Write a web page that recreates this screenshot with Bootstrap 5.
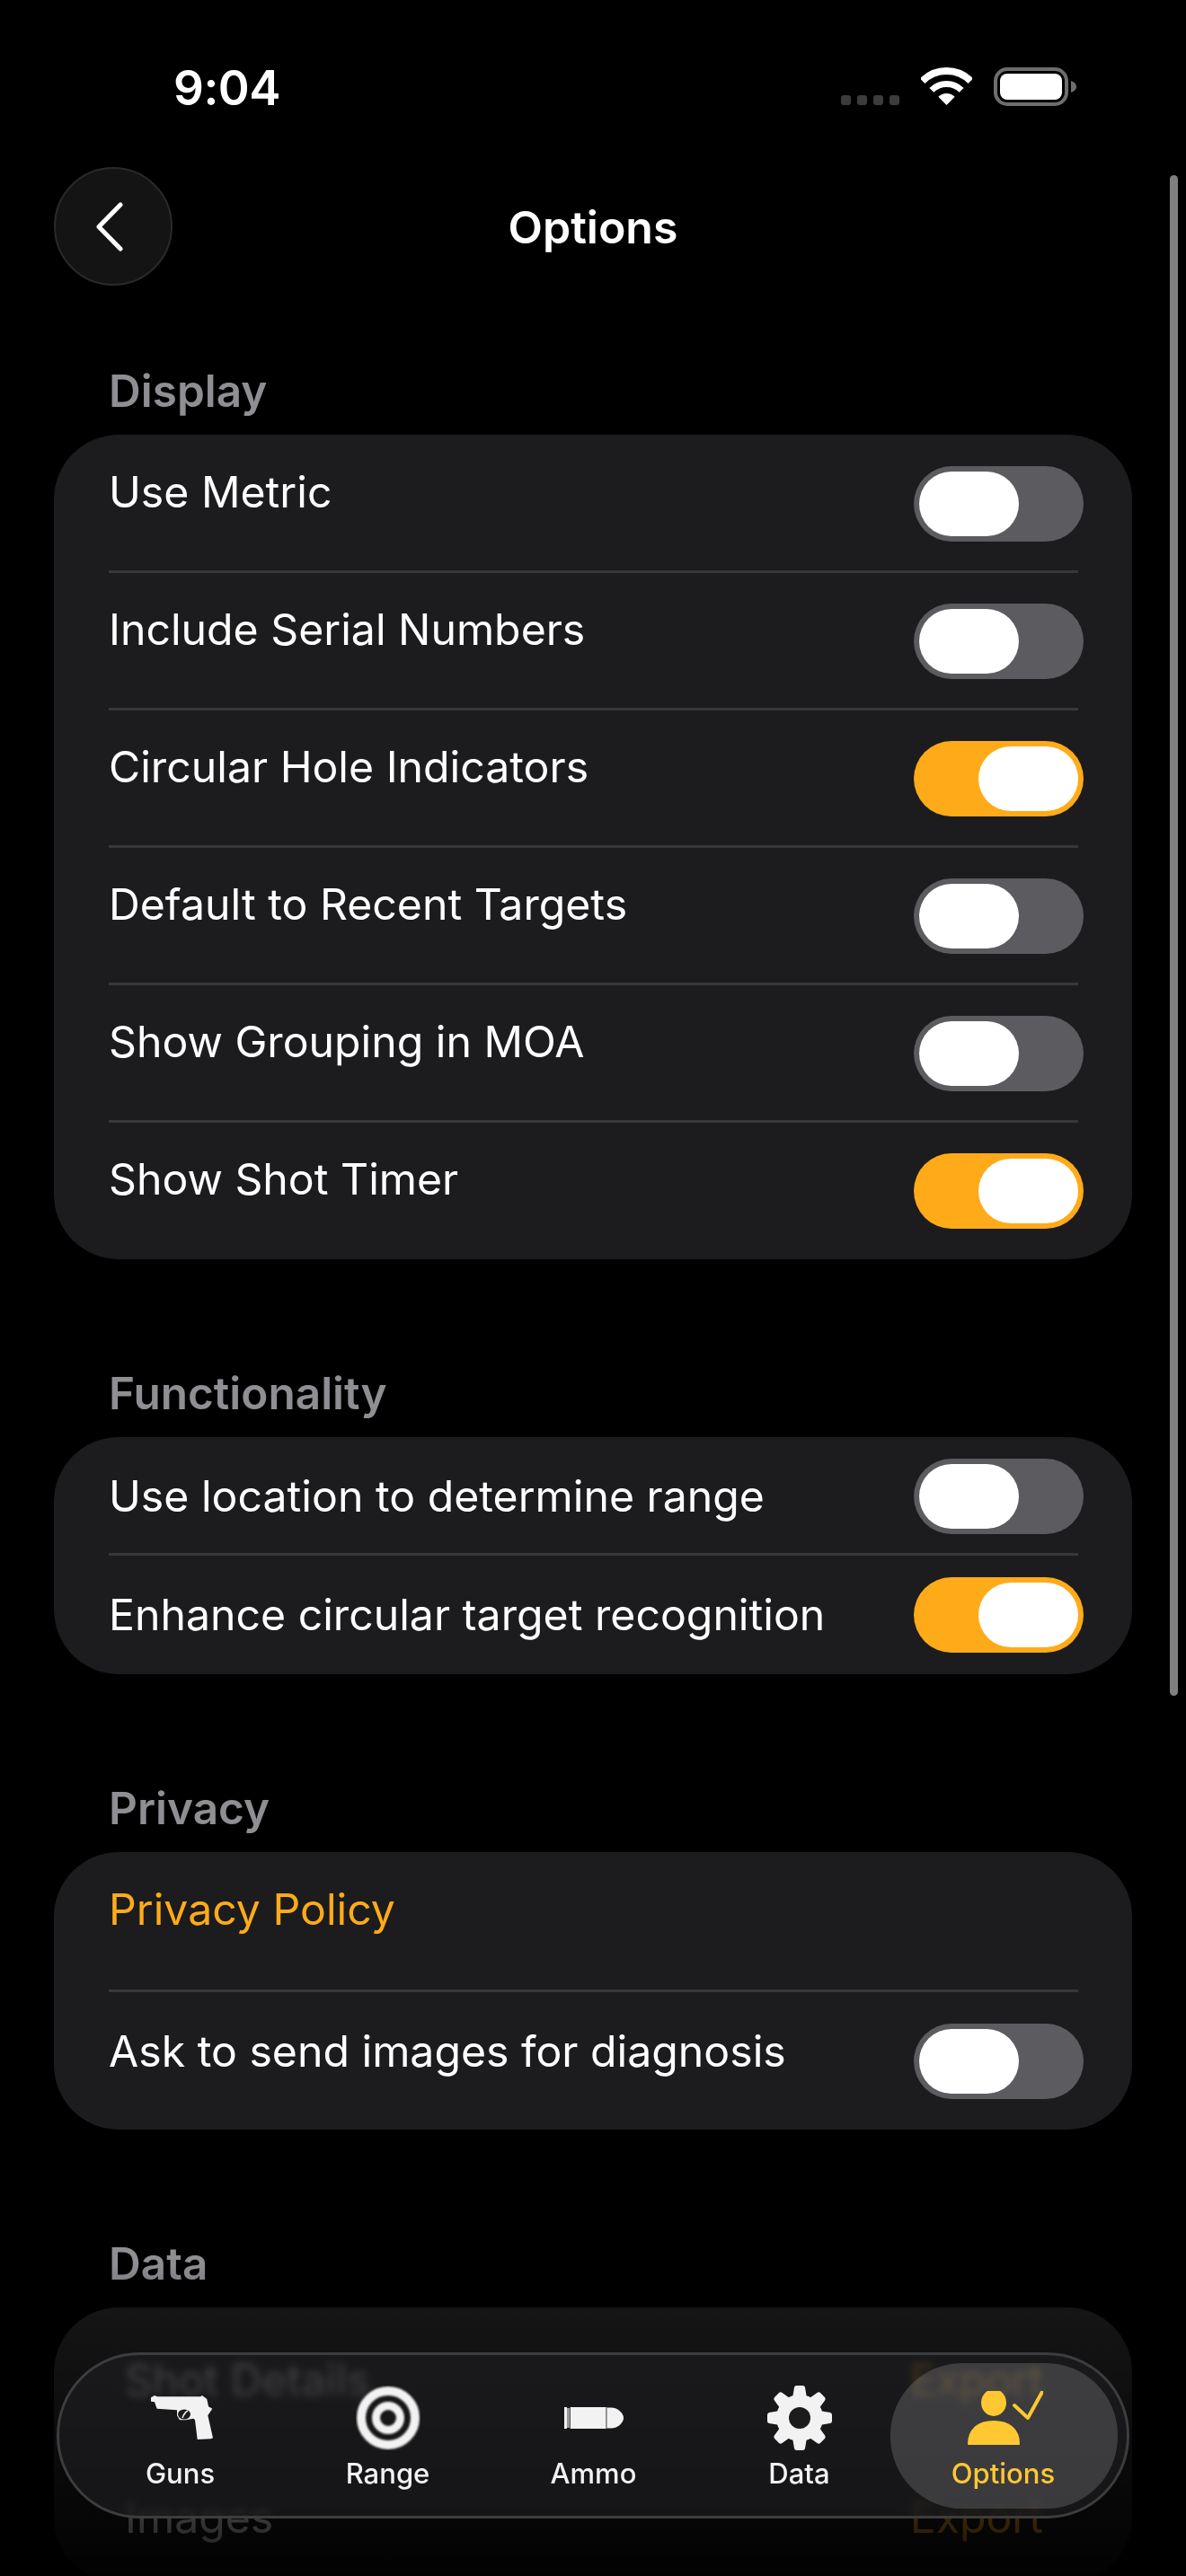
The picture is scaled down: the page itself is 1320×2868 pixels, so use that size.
<!DOCTYPE html>
<html lang="en">
<head>
  <meta charset="UTF-8" />
  <title>Options</title>
  <meta name="viewport" content="width=device-width, initial-scale=1" />
  <link href="https://cdn.jsdelivr.net/npm/bootstrap@5.3.0/dist/css/bootstrap.min.css" rel="stylesheet">
  <style>
    html, body {
      background-color: #000;
    }
    body {
      position: relative;
      height: 2868px;
      overflow: hidden;
      font-family: Inter, "Liberation Sans", sans-serif;
      color: #fff;
    }
    .status-bar {
      height: 186px;
      padding: 75px 122px 0 193px;
    }
    .status-time {
      font-size: 53px;
      line-height: 46px;
      font-weight: 600;
      letter-spacing: -.5px;
    }
    .signal-dots {
      gap: 7px;
      margin: 31px 24px 0 0;
    }
    .signal-dots span {
      width: 11px;
      height: 11px;
      border-radius: 3px;
      background-color: #3c3c3c;
    }
    .nav-head {
      height: 132px;
      padding-left: 60px;
    }
    .back-btn {
      width: 132px;
      height: 132px;
      background-color: #141414;
      border: 2px solid #2a2a2a;
    }
    .back-btn svg {
      margin-right: 8px;
    }
    .nav-title {
      left: 0;
      right: 0;
      top: 187px;
      line-height: 132px;
      font-size: 50px;
      font-weight: 600;
    }
    .group-title {
      font-size: 49.5px;
      line-height: 60px;
      font-weight: 600;
      color: #8e8e93;
      padding-left: 121px;
      margin-top: 119px;
      margin-bottom: 19px;
    }
    .group-title.first-title {
      margin-top: 87px;
    }
    .group-box {
      margin: 0 60px;
      padding: 0 60px 0 61px;
      background-color: #1c1c1e;
      border-radius: 72px;
    }
    .opt-row {
      border-bottom: 3px solid #38383a;
      font-size: 48.2px;
    }
    .opt-row:last-child {
      border-bottom: 0;
    }
    .rows-tall {
      padding-top: 1px;
      padding-bottom: 2px;
    }
    .rows-tall .opt-row {
      padding: 34px 0 32px;
    }
    .rows-tall .opt-label {
      padding-bottom: 26px;
    }
    .rows-tight .opt-row {
      padding: 24px 0 21px;
    }
    .rows-tight .opt-row:last-child {
      padding-bottom: 24px;
    }
    .opt-label {
      line-height: 50px;
      white-space: nowrap;
    }
    .privacy-link {
      height: 156px;
      padding-top: 39px;
      color: #ffab19;
    }
    .ask-row {
      padding: 35px 0 34px;
    }
    .ask-row .opt-label {
      padding-bottom: 22px;
    }
    .data-row {
      height: 153px;
      padding: 56px 39px 0 18px;
      border-bottom-color: transparent;
    }
    .export-link {
      color: #ffab19;
    }
    .switch-track {
      width: 189px;
      height: 84px;
      margin-right: -6px;
      padding: 6px;
      border-radius: 42px;
      background-color: #5b5b60;
    }
    .switch-track.is-on {
      background-color: #ffab19;
      justify-content: flex-end;
    }
    .switch-knob {
      width: 111px;
      height: 72px;
      border-radius: 36px;
      background-color: #fff;
    }
    .scroll-thumb {
      left: 1302px;
      top: 195px;
      width: 9px;
      height: 1693px;
      border-radius: 5px;
      background-color: #7f7f7f;
    }
    .bottom-fade {
      left: 0;
      right: 0;
      top: 2520px;
      height: 348px;
      background: linear-gradient(to bottom, rgba(0,0,0,0) 0, rgba(0,0,0,.25) 50px, rgba(0,0,0,.8) 290px, rgba(0,0,0,.92) 100%);
    }
    .tab-shell {
      left: 63px;
      top: 2619px;
      width: 1194px;
      height: 185px;
      padding: 34px 21px 0 22px;
      border-radius: 92px;
      border: 3px solid #3d3d3f;
      background-color: rgba(30,30,32,.68);
      backdrop-filter: blur(4px);
    }
    .tab-cell {
      width: 229px;
      color: #f2f2f2;
    }
    .tab-cell.is-active {
      color: #ffc832;
    }
    .tab-pill {
      left: 925px;
      top: 9px;
      width: 253px;
      height: 162px;
      border-radius: 80px;
      background-color: rgba(255,255,255,.16);
    }
    .tab-icon {
      height: 72px;
    }
    .tab-label {
      margin-top: 9px;
      font-size: 31px;
      line-height: 34px;
      font-weight: 500;
    }
    .is-active .tab-label,
    .first-tab .tab-label {
      margin-right: 4px;
    }
  </style>
</head>
<body>

  <!-- status bar -->
  <div class="status-bar d-flex align-items-start">
    <div class="status-time me-auto">9:04</div>
    <div class="signal-dots d-flex"><span></span><span></span><span></span><span></span></div>
    <svg width="57" height="42" viewBox="0 0 57 42" fill="none" stroke="#fff">
      <path d="M1.63 15.13A38 38 0 0 1 55.37 15.13" stroke-width="8"/>
      <path d="M11.88 25.38A23.5 23.5 0 0 1 45.12 25.38" stroke-width="7"/>
      <path d="M28.5 42L19.3 32.8A13 13 0 0 1 37.7 32.8Z" fill="#fff" stroke="none"/>
    </svg>
    <svg class="ms-4" width="92" height="43" viewBox="0 0 92 43">
      <rect x="2" y="2" width="79" height="39" rx="13" fill="none" stroke="#6e6e6e" stroke-width="4"/>
      <rect x="7" y="7" width="69" height="29" rx="8" fill="#fff"/>
      <path d="M86 15c3 1 6 3 6 6.500s-3 5.500-6 6.500z" fill="#6e6e6e"/>
    </svg>
  </div>

  <!-- header -->
  <div class="nav-head">
    <div class="back-btn rounded-circle d-flex align-items-center justify-content-center">
      <svg width="30" height="55" viewBox="0 0 30 55" fill="none" stroke="#fff" stroke-width="5" stroke-linecap="round" stroke-linejoin="round">
        <path d="M27 3L3 27.500L27 52"/>
      </svg>
    </div>
  </div>
  <div class="nav-title position-absolute text-center">Options</div>

  <div class="group-title first-title">Display</div>
  <div class="group-box rows-tall" id="displayRows"></div>

  <div class="group-title">Functionality</div>
  <div class="group-box rows-tight" id="functionRows"></div>

  <div class="group-title">Privacy</div>
  <div class="group-box">
    <div class="opt-row privacy-link"><div class="opt-label">Privacy Policy</div></div>
    <div class="opt-row ask-row d-flex align-items-center justify-content-between" id="askRow"></div>
  </div>

  <div class="group-title">Data</div>
  <div class="group-box">
    <div class="opt-row data-row d-flex justify-content-between">
      <div class="opt-label">Shot Details</div>
      <div class="opt-label export-link">Export</div>
    </div>
    <div class="opt-row data-row d-flex justify-content-between">
      <div class="opt-label">Images</div>
      <div class="opt-label export-link">Export</div>
    </div>
  </div>

  <div class="scroll-thumb position-absolute"></div>
  <div class="bottom-fade position-absolute"></div>

  <!-- tab bar -->
  <div class="tab-shell position-absolute d-flex">
    <div class="tab-pill position-absolute"></div>

    <div class="tab-cell first-tab d-flex flex-column align-items-center position-relative">
      <div class="tab-icon d-flex align-items-center">
        <svg width="70" height="50" viewBox="0 0 70 50" fill="#f2f2f2">
          <path d="M0 2.300L4 0L7 1.300H55L57 0L62.300 4L64 12.300L68.300 14.700L63.300 22.300L69 47.300L66.700 48.300L51.700 49L49 27.300L47.300 25.700L39 27.300H32L29 22.300V16.300L6.700 14.700L4 7.300L0 6.700Z"/>
          <ellipse cx="37" cy="21" rx="7" ry="5.500" fill="#1c1c1e"/>
          <path d="M41 17C39 18 37 20 35 25" fill="none" stroke="#f2f2f2" stroke-width="1.500"/>
        </svg>
      </div>
      <div class="tab-label">Guns</div>
    </div>

    <div class="tab-cell d-flex flex-column align-items-center position-relative">
      <div class="tab-icon d-flex align-items-center">
        <svg width="72" height="72" viewBox="0 0 72 72" fill="none" stroke="#f2f2f2">
          <defs><filter id="soft"><feGaussianBlur stdDeviation=".8"/></filter></defs>
          <g filter="url(#soft)">
            <circle cx="36" cy="36" r="30" stroke-width="10"/>
            <circle cx="36" cy="36" r="13.500" stroke-width="9"/>
          </g>
        </svg>
      </div>
      <div class="tab-label">Range</div>
    </div>

    <div class="tab-cell d-flex flex-column align-items-center position-relative">
      <div class="tab-icon d-flex align-items-center">
        <svg width="66" height="24" viewBox="0 0 66 24" fill="#f2f2f2">
          <rect x="0" y="0" width="3" height="24"/>
          <rect x="3" y="1" width="3" height="22" fill="#9a9a9a"/>
          <rect x="6" y="0" width="1" height="24" fill="#555"/>
          <rect x="7" y="0" width="39" height="24"/>
          <rect x="46" y="0" width="1.500" height="24" fill="#8a8a8a"/>
          <path d="M47.500 .5H52C60 .5 66 7 66 12S60 23.500 52 23.500H47.500Z"/>
        </svg>
      </div>
      <div class="tab-label">Ammo</div>
    </div>

    <div class="tab-cell d-flex flex-column align-items-center position-relative">
      <div class="tab-icon d-flex align-items-center">
        <svg width="72" height="72" viewBox="0 0 72 72" fill="#f2f2f2">
          <circle cx="36" cy="36" r="26"/>
          <path d="M28 14L30 2Q30.500 0 32.500 0H39.500Q41.500 0 42 2L44 14Z"/>
          <path d="M28 14L30 2Q30.500 0 32.500 0H39.500Q41.500 0 42 2L44 14Z" transform="rotate(45 36 36)"/>
          <path d="M28 14L30 2Q30.500 0 32.500 0H39.500Q41.500 0 42 2L44 14Z" transform="rotate(90 36 36)"/>
          <path d="M28 14L30 2Q30.500 0 32.500 0H39.500Q41.500 0 42 2L44 14Z" transform="rotate(135 36 36)"/>
          <path d="M28 14L30 2Q30.500 0 32.500 0H39.500Q41.500 0 42 2L44 14Z" transform="rotate(180 36 36)"/>
          <path d="M28 14L30 2Q30.500 0 32.500 0H39.500Q41.500 0 42 2L44 14Z" transform="rotate(225 36 36)"/>
          <path d="M28 14L30 2Q30.500 0 32.500 0H39.500Q41.500 0 42 2L44 14Z" transform="rotate(270 36 36)"/>
          <path d="M28 14L30 2Q30.500 0 32.500 0H39.500Q41.500 0 42 2L44 14Z" transform="rotate(315 36 36)"/>
          <circle cx="36" cy="36" r="12" fill="#1c1c1e"/>
        </svg>
      </div>
      <div class="tab-label">Data</div>
    </div>

    <div class="tab-cell is-active d-flex flex-column align-items-center position-relative">
      <div class="tab-icon d-flex align-items-center">
        <svg width="84" height="60" viewBox="0 0 84 60" fill="#ffc832">
          <ellipse cx="29" cy="13" rx="14" ry="15"/>
          <path d="M1 59C1 42 13 34 29 34S57 42 57 59Z" stroke="#ffc832" stroke-linejoin="round" stroke-width="2"/>
          <path d="M52 16L67 30L83 1" fill="none" stroke="#ffc832" stroke-width="4" stroke-linecap="round" stroke-linejoin="round"/>
        </svg>
      </div>
      <div class="tab-label">Options</div>
    </div>
  </div>

  <script>
    const switchHtml = on => `<div class="switch-track d-flex flex-shrink-0 ${on ? 'is-on' : ''}"><div class="switch-knob"></div></div>`;

    function fillRows(id, rows) {
      document.getElementById(id).innerHTML = rows.map(r => `
        <div class="opt-row d-flex align-items-center justify-content-between">
          <div class="opt-label">${r[0]}</div>
          ${switchHtml(r[1])}
        </div>`).join('');
    }

    fillRows('displayRows', [
      ['Use Metric', false],
      ['Include Serial Numbers', false],
      ['Circular Hole Indicators', true],
      ['Default to Recent Targets', false],
      ['Show Grouping in MOA', false],
      ['Show Shot Timer', true]
    ]);
    fillRows('functionRows', [
      ['Use location to determine range', false],
      ['Enhance circular target recognition', true]
    ]);
    document.getElementById('askRow').innerHTML = `<div class="opt-label">Ask to send images for diagnosis</div>${switchHtml(false)}`;
  </script>
  <script src="https://cdn.jsdelivr.net/npm/bootstrap@5.3.0/dist/js/bootstrap.bundle.min.js"></script>
</body>
</html>
